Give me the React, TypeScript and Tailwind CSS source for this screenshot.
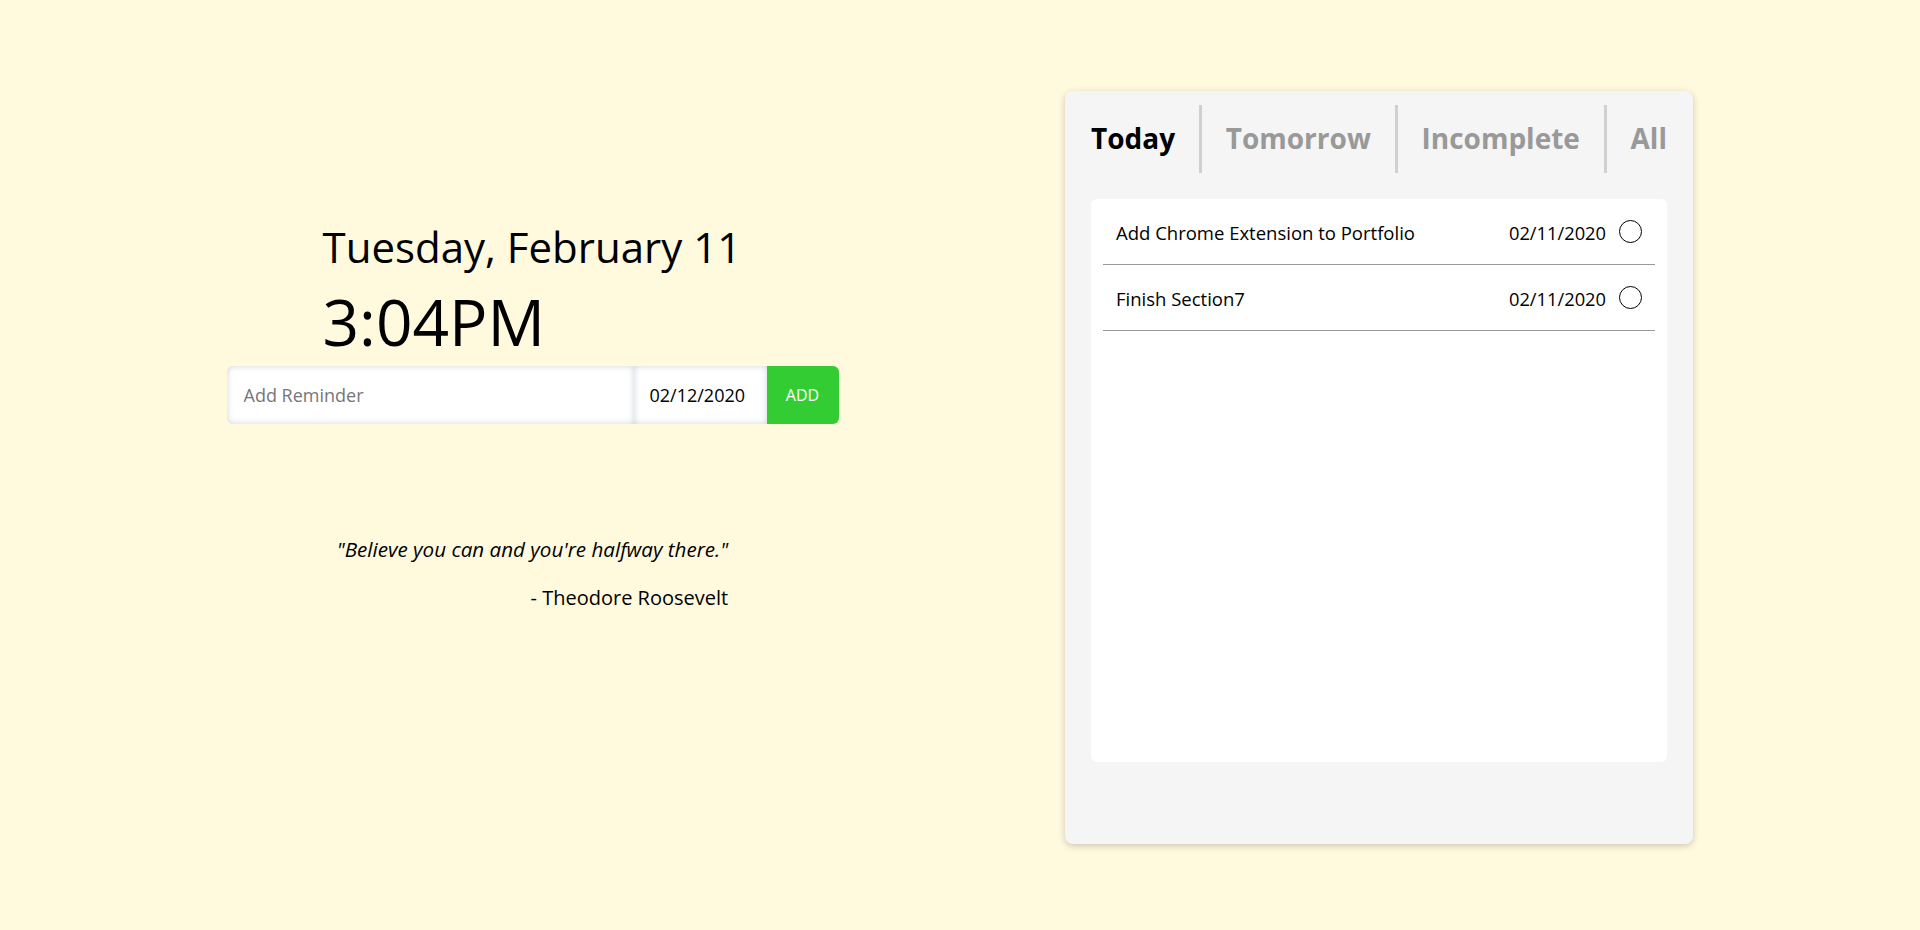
import { Fragment } from "react";

const reminders = [
    { text: "Add Chrome Extension to Portfolio", date: "02/11/2020" },
    { text: "Finish Section7", date: "02/11/2020" },
]

const tabs = ["Today", "Tomorrow", "Incomplete", "All"]

export default function App(){
    return(
        <main className="h-[930px] w-full bg-[#fff9de] flex font-['Open_Sans',sans-serif] text-black">
            {/* clock + add form + quote */}
            <section className="w-[1065px] flex flex-col items-center pt-[220px]">
                <section className="w-[612px] flex flex-col">
                    <div className="pl-[96px]">
                        <h1 className="text-[42px] leading-[54px]">Tuesday, February 11</h1>
                        <h2 className="text-[64px] leading-[72px] mt-[12px]">3:04PM</h2>
                    </div>
                    <form className="flex h-[58px] mt-[8px]" onSubmit={(e) => e.preventDefault()}>
                        <input
                            type="text"
                            placeholder="Add Reminder"
                            className="w-[407px] h-full bg-white rounded-l-md pl-[17px] text-[18px] outline-none placeholder:text-[#767676] shadow-[inset_0_0_6px_rgba(110,130,160,0.35)]"
                        />
                        <input
                            type="text"
                            defaultValue="02/12/2020"
                            className="w-[133px] h-full bg-white pl-[16px] text-[18px] outline-none shadow-[inset_0_0_6px_rgba(110,130,160,0.35)]"
                        />
                        <button type="submit" className="w-[72px] h-full bg-[#33cd33] text-white text-[16px] rounded-r-md">ADD</button>
                    </form>
                    <section className="self-center mt-[111px] flex flex-col">
                        <p className="italic text-[20.6px] leading-[28px]">"Believe you can and you're halfway there."</p>
                        <p className="text-right text-[20px] leading-[28px] mt-[21px]">- Theodore Roosevelt</p>
                    </section>
                </section>
            </section>

            {/* reminders panel */}
            <section className="w-[628px] h-[753px] mt-[91px] bg-[#f5f5f5] rounded-lg shadow-[0_2px_7px_rgba(0,0,0,0.2)] flex flex-col">
                <nav className="flex items-center justify-between px-[26px] pt-[14px] h-[82px]">
                    {tabs.map((tab, i) => (
                        <Fragment key={tab}>
                            {i > 0 && <span className="w-[3px] h-[68px] bg-[#d0d0d0]" />}
                            <button type="button" className={i === 0 ? "text-[28px] font-bold text-black -mt-[2px]" : "text-[28px] font-bold text-[#999999] -mt-[2px]"}>
                                {tab}
                            </button>
                        </Fragment>
                    ))}
                </nav>
                <section className="mx-[26px] mt-[26px] h-[563px] bg-white rounded-md flex flex-col">
                    {reminders.map((r) => (
                        <div key={r.text} className="mx-[12px] px-[13px] h-[66px] flex items-center justify-between border-b border-[#999999]">
                            <span className="text-[18.5px] pt-[2px]">{r.text}</span>
                            <div className="flex items-center gap-[13px]">
                                <span className="text-[18.3px] pt-[2px]">{r.date}</span>
                                <span className="w-[23px] h-[23px] rounded-full border border-black" />
                            </div>
                        </div>
                    ))}
                </section>
            </section>
        </main>
    )
}
